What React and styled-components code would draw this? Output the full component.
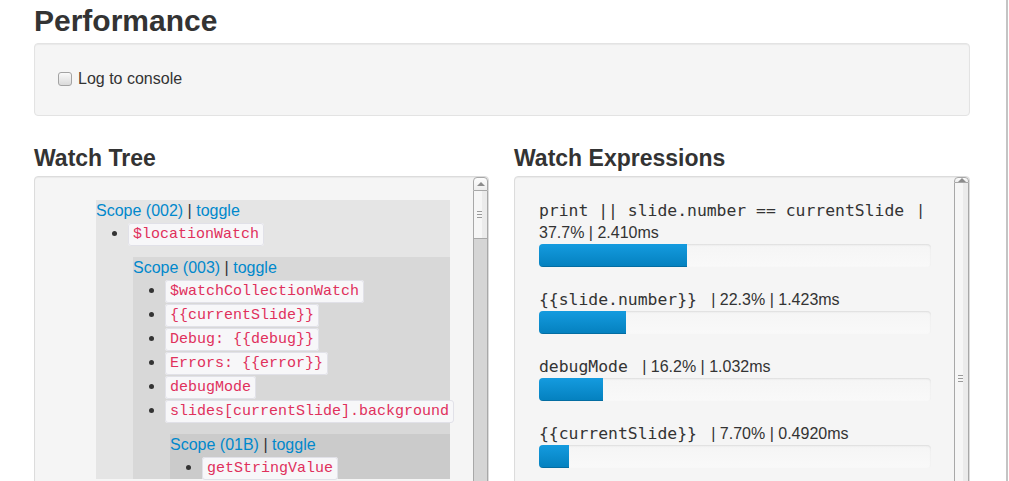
import React from 'react'
import styled, { createGlobalStyle } from 'styled-components'

const GlobalStyle = createGlobalStyle`
  html, body {
    margin: 0;
    overflow: hidden;
    background: #fff;
  }
  body {
    font-family: "Liberation Sans", Arial, sans-serif;
    font-size: 16px;
    color: #333;
  }
`

const Page = styled.div`
  box-sizing: border-box;
  width: 1008px;
  height: 481px;
  padding-left: 34px;
  border-right: 2px solid #c4c4c4;
  overflow: hidden;
`

const Main = styled.div`
  width: 936px;
`

const Title = styled.h1`
  margin: 4px 0 6px;
  font-size: 30px;
  line-height: 33px;
  font-weight: bold;
`

const Well = styled.div`
  box-sizing: border-box;
  padding: 24px 22px 25px;
  background: #f5f5f5;
  border: 1px solid #e3e3e3;
  border-radius: 4px;
  box-shadow: inset 0 1px 1px rgba(0, 0, 0, 0.05);
`

const CheckLabel = styled.label`
  display: flex;
  align-items: center;
  line-height: 22px;
`

const Checkbox = styled.input`
  appearance: none;
  box-sizing: border-box;
  width: 14px;
  height: 14px;
  margin: 0 6px 0 1px;
  border: 1px solid #a3a3a3;
  border-radius: 3px;
  background: linear-gradient(#fafafa, #dadada);
`

const Columns = styled.div`
  display: grid;
  grid-template-columns: 455px 456px;
  column-gap: 25px;
`

const SectionTitle = styled.h2`
  margin: 30px 0 5px;
  font-size: 23px;
  line-height: 25px;
  font-weight: bold;
`

const Panel = styled.div`
  display: flex;
  height: 330px;
  background: #f5f5f5;
  border: 1px solid #dcdcdc;
  border-radius: 4px;
  overflow: hidden;
  box-shadow: inset 0 1px 1px rgba(0, 0, 0, 0.05);
`

const PanelBody = styled.div`
  flex: 1;
  min-width: 0;
  padding: ${p => p.$pad};
`

/* old gtk-looking scrollbar */
const Scrollbar = styled.div`
  display: flex;
  flex-direction: column;
  flex-shrink: 0;
  width: 15px;
`

const ScrollButton = styled.div`
  box-sizing: border-box;
  display: flex;
  align-items: center;
  justify-content: center;
  height: 14px;
  border: 1px solid #a8a8a8;
  border-radius: 4px 4px 0 0;
  background: linear-gradient(#fdfdfd, #ededed);

  &::before {
    content: '';
    border-left: 4px solid transparent;
    border-right: 4px solid transparent;
    border-bottom: 4px solid #8c8c8c;
  }
`

const Thumb = styled.div`
  box-sizing: border-box;
  display: flex;
  align-items: center;
  justify-content: center;
  height: ${p => p.$size}px;
  flex-shrink: 0;
  border: 1px solid #a8a8a8;
  border-top: none;
  background: linear-gradient(to right, #f6f6f6 62%, #ebebeb 62%);
`

const Grip = styled.div`
  width: 5px;
  height: 7px;
  margin-left: -2px;
  background: repeating-linear-gradient(#9a9a9a 0 1px, transparent 1px 3px);
`

const Track = styled.div`
  flex: 1;
  background: #d5d5d5;
  border-left: 1px solid #a8a8a8;
  border-right: 1px solid #a8a8a8;
`

const ScopeBox = styled.div`
  background: ${p => p.$bg};
`

const ScopeHeader = styled.div`
  padding-top: 1px;
  line-height: 20px;
`

const Link = styled.a`
  color: #0088cc;
  text-decoration: none;
`

const ItemList = styled.ul`
  margin: 0;
  padding-left: 32px;
  list-style: disc;
`

const Item = styled.li`
  height: 24px;
  line-height: 24px;
`

const Code = styled.code`
  padding: 2px 4px;
  font-family: "Liberation Mono", "Courier New", monospace;
  font-size: 15px;
  line-height: 17px;
  color: #e0305c;
  background: #f7f7f9;
  border: 1px solid #e1e1e8;
  border-radius: 3px;
`

const ChildScopes = styled.div`
  margin-top: 12px;
  padding-left: 37px;
`

const Expression = styled.div`
  line-height: 22px;
`

const Mono = styled.span`
  font-family: "DejaVu Sans Mono", monospace;
  font-size: 16.4px;
  white-space: pre;
`

const Progress = styled.div`
  height: 23px;
  margin-bottom: 22px;
  background: linear-gradient(#f5f5f5, #f9f9f9);
  border-radius: 4px;
  overflow: hidden;
  box-shadow: inset 0 1px 2px rgba(0, 0, 0, 0.1);
`

const Bar = styled.div`
  height: 100%;
  background: linear-gradient(#149bdf, #0480be);
  box-shadow: inset 0 -1px 0 rgba(0, 0, 0, 0.15);
`

const tree = {
  id: '002',
  watchers: ['$locationWatch'],
  children: [
    {
      id: '003',
      watchers: [
        '$watchCollectionWatch',
        '{{currentSlide}}',
        'Debug: {{debug}}',
        'Errors: {{error}}',
        'debugMode',
        'slides[currentSlide].background',
      ],
      children: [
        {
          id: '01B',
          watchers: ['getStringValue'],
          children: [],
        },
      ],
    },
  ],
}

const expressions = [
  { expr: 'print || slide.number == currentSlide', pct: '37.7%', time: '2.410ms', width: 37.7 },
  { expr: '{{slide.number}}', pct: '22.3%', time: '1.423ms', width: 22.3 },
  { expr: 'debugMode', pct: '16.2%', time: '1.032ms', width: 16.2 },
  { expr: '{{currentSlide}}', pct: '7.70%', time: '0.4920ms', width: 7.7 },
]

const shades = ['#e5e5e5', '#d8d8d8', '#cbcbcb']

const Scope = ({ scope, depth = 0 }) => (
  <ScopeBox $bg={shades[depth] || '#c0c0c0'}>
    <ScopeHeader>
      <Link href="#">Scope ({scope.id})</Link> | <Link href="#">toggle</Link>
    </ScopeHeader>
    <ItemList>
      {scope.watchers.map(w => (
        <Item key={w}>
          <Code>{w}</Code>
        </Item>
      ))}
    </ItemList>
    {scope.children.length > 0 && (
      <ChildScopes>
        {scope.children.map(c => (
          <Scope key={c.id} scope={c} depth={depth + 1} />
        ))}
      </ChildScopes>
    )}
  </ScopeBox>
)

const FakeScrollbar = ({ thumb }) => (
  <Scrollbar>
    <ScrollButton />
    <Thumb $size={thumb}>
      <Grip />
    </Thumb>
    <Track />
  </Scrollbar>
)

export default function App() {
  return (
    <Page>
      <GlobalStyle />
      <Main>
        <Title>Performance</Title>
        <Well>
          <CheckLabel>
            <Checkbox type="checkbox" />
            Log to console
          </CheckLabel>
        </Well>
        <Columns>
          <div>
            <SectionTitle>Watch Tree</SectionTitle>
            <Panel>
              <PanelBody $pad="23px 23px 0 61px">
                <Scope scope={tree} />
              </PanelBody>
              <FakeScrollbar thumb={48} />
            </Panel>
          </div>
          <div>
            <SectionTitle>Watch Expressions</SectionTitle>
            <Panel>
              <PanelBody $pad="23px 23px 0 24px">
                {expressions.map(e => (
                  <div key={e.expr}>
                    <Expression>
                      <Mono>{e.expr + ' '}</Mono> | {e.pct} | {e.time}
                    </Expression>
                    <Progress>
                      <Bar style={{ width: `${e.width}%` }} />
                    </Progress>
                  </div>
                ))}
              </PanelBody>
              <FakeScrollbar thumb={391} />
            </Panel>
          </div>
        </Columns>
      </Main>
    </Page>
  )
}
